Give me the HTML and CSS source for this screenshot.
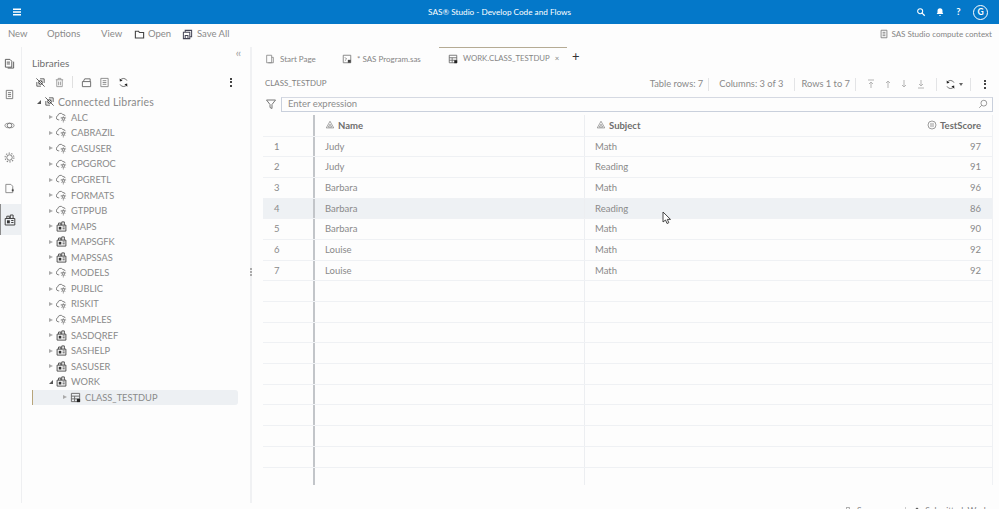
FILE: index.html
```html
<!DOCTYPE html>
<html lang="en">
<head>
<meta charset="utf-8">
<title>SAS Studio</title>
<link rel="stylesheet" href="styles.css">
</head>
<body>
<svg class="defs" width="0" height="0" aria-hidden="true">
  <symbol id="i-cloud" viewBox="0 0 12 12"><path d="M3.500 8.500H2.500A2.300 2.300 0 0 1 2 4 3 3 0 0 1 7.500 2.800 2.200 2.200 0 0 1 10 4.500" fill="none" stroke="#777" stroke-width="1"/><path d="M5 6.500h6M8 4.500v7M5.800 9.800l4.400-4.400M5.800 5.400l4.400 4.400" fill="none" stroke="#777" stroke-width=".7"/><circle cx="8" cy="7.500" r="1.300" fill="#fff" stroke="#666" stroke-width=".8"/></symbol>
  <symbol id="i-lib" viewBox="0 0 12 12"><path d="M1.200 4.500h9.600v6.500H1.200zM2.800 4.500V2.200h2.500V4.500M6.300 4.500V1h2.800V4.500" fill="none" stroke="#444" stroke-width="1"/><path d="M3 6.300h2.800v3H3z" fill="#333"/><path d="M7.200 6.500h2.300M7.200 8.500h2.300" stroke="#444"/></symbol>
  <symbol id="i-table" viewBox="0 0 12 12"><path d="M1.500 1.500h9v9h-9zM1.500 4.500h9M1.500 7.500h9M5 4.500v6" fill="none" stroke="#666"/><path d="M7.500 7.500H11V11H7.500z" fill="#222"/></symbol>
  <symbol id="i-disc" viewBox="0 0 12 12"><path d="M1.500 1.500l9 9M2 5.500 2 10 6.500 10M5.500 2H10V6.500" fill="none" stroke="#555" stroke-width="1"/><path d="M4 8l4-4" stroke="#777"/><circle cx="6" cy="6" r="2" fill="none" stroke="#333"/></symbol>
  <symbol id="i-tri" viewBox="0 0 12 12"><path d="M6 1.500 10.500 9.500H1.500zM6 5 8 8.500H4z" fill="none" stroke="#888" stroke-width=".9"/></symbol>
  <symbol id="i-num" viewBox="0 0 12 12"><circle cx="6" cy="6" r="4.800" fill="none" stroke="#888"/><path d="M4.800 3.500v5M7.200 3.500v5" stroke="#888"/></symbol>
  <symbol id="i-refresh" viewBox="0 0 12 12"><path d="M9.800 4A4.200 4.200 0 0 0 2.500 3.500M2.200 8a4.200 4.200 0 0 0 7.300.5" fill="none" stroke="#666"/><path d="M1.800 1.500 2 5l3-1zM10.200 10.500 10 7l-3 1z" fill="#222"/></symbol>
  <symbol id="i-doc" viewBox="0 0 12 12"><path d="M2.500 1.500h7v9h-7zM4.300 4h3.400M4.300 6h3.400M4.300 8h3.400" fill="none" stroke="#777"/></symbol>
</svg>

<header class="app-bar">
  <div class="app-bar-left">
    <svg class="ico-14" viewBox="0 0 14 14"><path d="M3 3.500h8v1.400H3zM3 6.300h8v1.400H3zM3 9.100h8v1.400H3z" fill="#fff"/></svg>
  </div>
  <div class="app-title">SAS® Studio - Develop Code and Flows</div>
  <div class="app-bar-right">
    <svg class="ico-10" viewBox="0 0 12 12"><circle cx="5" cy="5" r="3" fill="none" stroke="#fff" stroke-width="1.300"/><path d="M7.300 7.300 10.500 10.500" stroke="#fff" stroke-width="1.500"/></svg>
    <svg class="ico-10" viewBox="0 0 12 12"><path d="M6 1.500a3 3 0 0 1 3 3V7l1 1.500H2L3 7V4.500a3 3 0 0 1 3-3zM5 9.500h2v1H5z" fill="#fff"/></svg>
    <span class="help">?</span>
    <span class="avatar">G</span>
  </div>
</header>

<nav class="menu-bar">
  <div class="menu-items">
    <span class="menu-new">New</span>
    <span class="menu-options">Options</span>
    <span class="menu-view">View</span>
    <span class="menu-open"><svg class="ico-11" viewBox="0 0 12 12"><path d="M1.500 2.500h3.500l1 1.300h4.500v6h-9z" fill="none" stroke="#444" stroke-width="1.200"/></svg>Open</span>
    <span class="menu-save"><svg class="ico-11" viewBox="0 0 12 12"><path d="M1.500 3.500h7v7h-7zM3.500 3.500v-2h7v7h-2M3.500 7h3v3.500h-3z" fill="none" stroke="#445" stroke-width="1.100"/></svg>Save All</span>
  </div>
  <div class="context"><svg class="ico-10" viewBox="0 0 12 12"><use href="#i-doc"/></svg>SAS Studio compute context</div>
</nav>

<div class="workspace">
  <aside class="rail">
    <div class="rail-btn"><svg class="ico-11" viewBox="0 0 12 12"><path d="M1.500 1.500h5l2 2v6.500h-7zM3 4.500h3.500M3 6.500h3.500M10.500 4v7H4" fill="none" stroke="#555"/></svg></div>
    <div class="rail-btn"><svg class="ico-11" viewBox="0 0 12 12"><use href="#i-doc"/></svg></div>
    <div class="rail-btn"><svg class="ico-11" viewBox="0 0 12 12"><ellipse cx="6" cy="6" rx="5" ry="2.500" fill="none" stroke="#888"/><circle cx="6" cy="6" r="2.500" fill="none" stroke="#777"/></svg></div>
    <div class="rail-btn"><svg class="ico-11" viewBox="0 0 12 12"><circle cx="6" cy="6" r="3" fill="none" stroke="#777"/><circle cx="6" cy="6" r="4.800" fill="none" stroke="#888" stroke-dasharray="1.500 1.500" stroke-width="1.200"/></svg></div>
    <div class="rail-btn"><svg class="ico-11" viewBox="0 0 12 12"><path d="M2 1.500h5.500l2 2v7H2zM9.500 6v2" fill="none" stroke="#888"/><path d="M8.500 7h2v2h-2z" fill="#444"/></svg></div>
    <div class="rail-btn active"><svg class="ico-12" viewBox="0 0 12 12"><use href="#i-lib"/></svg></div>
  </aside>

  <section class="panel">
    <div class="collapse">‹‹</div>
    <h2 class="panel-title">Libraries</h2>
    <div class="panel-tools">
      <div class="tool-group">
        <svg class="ico-11" viewBox="0 0 12 12"><use href="#i-disc"/></svg>
        <svg class="ico-11" viewBox="0 0 12 12"><path d="M2 3h8M4.500 3V1.500h3V3M3 3v7.500h6V3M5 5v4M7 5v4" fill="none" stroke="#999"/></svg>
        <span class="tool-sep"></span>
        <svg class="ico-11" viewBox="0 0 12 12"><path d="M1.500 5h9v5.500h-9zM2.500 5l1.500-3h6v3" fill="none" stroke="#666"/></svg>
        <svg class="ico-11" viewBox="0 0 12 12"><path d="M2 1.500h8v9H2zM4 4h4M4 6h4M4 8h4" fill="none" stroke="#888"/></svg>
        <svg class="ico-11" viewBox="0 0 12 12"><use href="#i-refresh"/></svg>
      </div>
      <div class="dots"><i></i><i></i><i></i></div>
    </div>
    <ul class="tree">
      <li class="node root"><span class="arrow down"></span><svg class="ico-11" viewBox="0 0 12 12"><use href="#i-disc"/></svg>Connected Libraries</li>
      <li class="node"><span class="arrow"></span><svg class="ico-11" viewBox="0 0 12 12"><use href="#i-cloud"/></svg>ALC</li>
      <li class="node"><span class="arrow"></span><svg class="ico-11" viewBox="0 0 12 12"><use href="#i-cloud"/></svg>CABRAZIL</li>
      <li class="node"><span class="arrow"></span><svg class="ico-11" viewBox="0 0 12 12"><use href="#i-cloud"/></svg>CASUSER</li>
      <li class="node"><span class="arrow"></span><svg class="ico-11" viewBox="0 0 12 12"><use href="#i-cloud"/></svg>CPGGROC</li>
      <li class="node"><span class="arrow"></span><svg class="ico-11" viewBox="0 0 12 12"><use href="#i-cloud"/></svg>CPGRETL</li>
      <li class="node"><span class="arrow"></span><svg class="ico-11" viewBox="0 0 12 12"><use href="#i-cloud"/></svg>FORMATS</li>
      <li class="node"><span class="arrow"></span><svg class="ico-11" viewBox="0 0 12 12"><use href="#i-cloud"/></svg>GTPPUB</li>
      <li class="node"><span class="arrow"></span><svg class="ico-11" viewBox="0 0 12 12"><use href="#i-lib"/></svg>MAPS</li>
      <li class="node"><span class="arrow"></span><svg class="ico-11" viewBox="0 0 12 12"><use href="#i-lib"/></svg>MAPSGFK</li>
      <li class="node"><span class="arrow"></span><svg class="ico-11" viewBox="0 0 12 12"><use href="#i-lib"/></svg>MAPSSAS</li>
      <li class="node"><span class="arrow"></span><svg class="ico-11" viewBox="0 0 12 12"><use href="#i-cloud"/></svg>MODELS</li>
      <li class="node"><span class="arrow"></span><svg class="ico-11" viewBox="0 0 12 12"><use href="#i-cloud"/></svg>PUBLIC</li>
      <li class="node"><span class="arrow"></span><svg class="ico-11" viewBox="0 0 12 12"><use href="#i-cloud"/></svg>RISKIT</li>
      <li class="node"><span class="arrow"></span><svg class="ico-11" viewBox="0 0 12 12"><use href="#i-cloud"/></svg>SAMPLES</li>
      <li class="node"><span class="arrow"></span><svg class="ico-11" viewBox="0 0 12 12"><use href="#i-lib"/></svg>SASDQREF</li>
      <li class="node"><span class="arrow"></span><svg class="ico-11" viewBox="0 0 12 12"><use href="#i-lib"/></svg>SASHELP</li>
      <li class="node"><span class="arrow"></span><svg class="ico-11" viewBox="0 0 12 12"><use href="#i-lib"/></svg>SASUSER</li>
      <li class="node"><span class="arrow down"></span><svg class="ico-11" viewBox="0 0 12 12"><use href="#i-lib"/></svg>WORK</li>
      <li class="node leaf"><span class="arrow"></span><svg class="ico-11" viewBox="0 0 12 12"><use href="#i-table"/></svg>CLASS_TESTDUP</li>
    </ul>
    <div class="grip"><i></i><i></i><i></i></div>
  </section>

  <main class="main">
    <div class="tabs">
      <div class="tab tab-start"><svg class="ico-10" viewBox="0 0 12 12"><path d="M2 1.500h6v9H2zM8 4h2v6.500H4" fill="none" stroke="#888"/></svg>Start Page</div>
      <div class="tab tab-prog"><svg class="ico-10" viewBox="0 0 12 12"><path d="M1.500 1.500h9v9h-9zM3.500 4l2 2-2 2" fill="none" stroke="#777"/><path d="M7 7h3.500v3.500H7z" fill="#444"/></svg>* SAS Program.sas</div>
      <div class="tab tab-active"><svg class="ico-10" viewBox="0 0 12 12"><use href="#i-table"/></svg>WORK.CLASS_TESTDUP<span class="tab-x">×</span></div>
      <div class="tab-add">+</div>
    </div>
    <div class="info-bar">
      <span class="table-name">CLASS_TESTDUP</span>
      <div class="info-right">
        <span class="info info-rows">Table rows: 7</span>
        <span class="info info-cols">Columns: 3 of 3</span>
        <span class="info info-range">Rows 1 to 7</span>
        <span class="info info-nav">
          <svg class="ico-10" viewBox="0 0 10 10"><path d="M2 1h6M5 9V3M3 5l2-2 2 2" fill="none" stroke="#b5b5b5"/></svg>
          <svg class="ico-10" viewBox="0 0 10 10"><path d="M5 9V2M3 4l2-2 2 2" fill="none" stroke="#b5b5b5"/></svg>
          <svg class="ico-10" viewBox="0 0 10 10"><path d="M5 1v7M3 6l2 2 2-2" fill="none" stroke="#b5b5b5"/></svg>
          <svg class="ico-10" viewBox="0 0 10 10"><path d="M2 9h6M5 1v6M3 5l2 2 2-2" fill="none" stroke="#b5b5b5"/></svg>
        </span>
        <span class="info info-refresh"><svg class="ico-11" viewBox="0 0 12 12"><use href="#i-refresh"/></svg><span class="caret"></span></span>
        <span class="info-more"><span class="dots"><i></i><i></i><i></i></span></span>
      </div>
    </div>
    <div class="filter-bar">
      <svg class="ico-12" viewBox="0 0 12 12"><path d="M1.500 2h9L7 6.500V10.500L5 9.500V6.500z" fill="none" stroke="#777"/></svg>
      <div class="filter-input"><span>Enter expression</span><svg class="ico-10" viewBox="0 0 12 12"><circle cx="7" cy="5" r="3.500" fill="none" stroke="#888"/><path d="M4.500 7.500 1.500 10.500" stroke="#888"/></svg></div>
    </div>
    <div class="grid">
      <div class="row head">
        <div class="c-num"></div>
        <div class="c-col"><svg class="ico-10" viewBox="0 0 12 12"><use href="#i-tri"/></svg>Name</div>
        <div class="c-col"><svg class="ico-10" viewBox="0 0 12 12"><use href="#i-tri"/></svg>Subject</div>
        <div class="c-score"><svg class="ico-10" viewBox="0 0 12 12"><use href="#i-num"/></svg>TestScore</div>
      </div>
      <div class="row"><div class="c-num">1</div><div class="c-col">Judy</div><div class="c-col">Math</div><div class="c-score">97</div></div>
      <div class="row"><div class="c-num">2</div><div class="c-col">Judy</div><div class="c-col">Reading</div><div class="c-score">91</div></div>
      <div class="row"><div class="c-num">3</div><div class="c-col">Barbara</div><div class="c-col">Math</div><div class="c-score">96</div></div>
      <div class="row hover"><div class="c-num">4</div><div class="c-col">Barbara</div><div class="c-col">Reading</div><div class="c-score">86</div></div>
      <div class="row"><div class="c-num">5</div><div class="c-col">Barbara</div><div class="c-col">Math</div><div class="c-score">90</div></div>
      <div class="row"><div class="c-num">6</div><div class="c-col">Louise</div><div class="c-col">Math</div><div class="c-score">92</div></div>
      <div class="row"><div class="c-num">7</div><div class="c-col">Louise</div><div class="c-col">Math</div><div class="c-score">92</div></div>
      <div class="row"><div class="c-num"></div><div class="c-col"></div><div class="c-col"></div><div class="c-score"></div></div>
      <div class="row"><div class="c-num"></div><div class="c-col"></div><div class="c-col"></div><div class="c-score"></div></div>
      <div class="row"><div class="c-num"></div><div class="c-col"></div><div class="c-col"></div><div class="c-score"></div></div>
      <div class="row"><div class="c-num"></div><div class="c-col"></div><div class="c-col"></div><div class="c-score"></div></div>
      <div class="row"><div class="c-num"></div><div class="c-col"></div><div class="c-col"></div><div class="c-score"></div></div>
      <div class="row"><div class="c-num"></div><div class="c-col"></div><div class="c-col"></div><div class="c-score"></div></div>
      <div class="row"><div class="c-num"></div><div class="c-col"></div><div class="c-col"></div><div class="c-score"></div></div>
      <div class="row"><div class="c-num"></div><div class="c-col"></div><div class="c-col"></div><div class="c-score"></div></div>
      <div class="row"><div class="c-num"></div><div class="c-col"></div><div class="c-col"></div><div class="c-score"></div></div>
      <div class="row last"><div class="c-num"></div><div class="c-col"></div><div class="c-col"></div><div class="c-score"></div></div>
    </div>
    <svg class="cursor" width="11" height="14" viewBox="0 0 11 14"><path d="M1 1v10l2.500-2 1.500 3.500 1.800-.8L5.300 8.400H8.500z" fill="#fff" stroke="#333" stroke-width=".9"/></svg>
  </main>
</div>

<footer class="status">
  <svg class="status-ico" viewBox="0 0 8 8"><path d="M.5.500h4v7h-4z" fill="none" stroke="#888"/></svg>
  <span class="status-server">Server: Work</span>
  <span class="status-sep"></span>
  <svg class="status-ico" viewBox="0 0 8 8"><path d="M4 .500 7.500 4h-7z" fill="#555"/></svg>
  <span>Submitted: Work 44</span>
</footer>
</body>
</html>
```

FILE: styles.css
```css
* { box-sizing: border-box; }
html, body { margin: 0; padding: 0; }
body {
  width: 999px;
  height: 509px;
  overflow: hidden;
  background: #fdfdfd;
  color: #858585;
  font: 10px/1 Lato, "Open Sans", sans-serif;
}
svg { display: block; flex: none; }
.defs { position: absolute; }
.ico-10 { width: 10px; height: 10px; }
.ico-11 { width: 11px; height: 11px; }
.ico-12 { width: 12px; height: 12px; }
.ico-14 { width: 14px; height: 14px; }

.app-bar {
  height: 24px;
  background: #0478c9;
  color: #fff;
  display: grid;
  grid-template-columns: 1fr auto 1fr;
  align-items: center;
}
.app-bar-left { padding-left: 10px; }
.app-title { font-size: 8.200px; }
.app-bar-right {
  display: flex;
  align-items: center;
  justify-content: flex-end;
  gap: 9px;
  padding-right: 11px;
}
.help { width: 10px; text-align: center; font-weight: 700; font-size: 9.500px; }
.avatar {
  width: 15px;
  height: 15px;
  border: 1px solid #fff;
  border-radius: 50%;
  display: flex;
  align-items: center;
  justify-content: center;
  font-size: 8.500px;
  font-weight: 700;
  margin-left: .5px;
}

.menu-bar {
  height: 23px;
  display: flex;
  align-items: center;
  justify-content: space-between;
  padding: 0 7px 3px 8px;
}
.menu-items { display: flex; align-items: center; font-size: 9.500px; color: #8a8a8a; }
.menu-new { width: 39px; }
.menu-options { width: 54px; }
.menu-view { width: 33px; }
.menu-open { width: 48px; display: flex; align-items: center; gap: 3px; }
.menu-save { display: flex; align-items: center; gap: 4px; }
.context { display: flex; align-items: center; gap: 2px; font-size: 8.050px; color: #858585; }

.workspace { height: 456px; display: flex; }
.rail { width: 22px; border-right: 1px solid #eeeff1; padding-top: 1px; }
.rail-btn {
  height: 31.200px;
  padding-right: 2px;
  display: flex;
  align-items: center;
  justify-content: center;
}
.rail-btn.active { background: #edf0f3; border-left: 1px solid #8d8d8d; padding-right: 3px; }

.panel {
  width: 230px;
  position: relative;
  border-right: 2px solid #f0f1f3;
  padding: 11px 0 0 10px;
}
.collapse {
  position: absolute;
  right: 10px;
  top: 0;
  font-size: 11px;
  letter-spacing: -1px;
  color: #999;
}
.panel-title { margin: 0; font-size: 10px; font-weight: 400; color: #6e6e6e; height: 12px; }
.panel-tools {
  height: 24px;
  width: 205px;
  display: flex;
  align-items: center;
  justify-content: space-between;
  padding: 0 5px 0 3px;
}
.tool-group { display: flex; align-items: center; gap: 7.500px; }
.tool-sep { width: 1px; height: 12px; background: #e0e0e0; }
.dots { display: flex; flex-direction: column; gap: 1.500px; }
.dots i { width: 2px; height: 2px; background: #444; display: block; }

.tree { list-style: none; margin: 0; padding: 0; }
.node {
  height: 15.570px;
  display: flex;
  align-items: center;
  padding-left: 17px;
  color: #8a8a8a;
  font-size: 9.300px;
}
.node svg { margin: 0 4px 0 3px; }
.root { padding-left: 5px; font-size: 10.500px; letter-spacing: .2px; }
.root svg { margin: 0 3px; }
.leaf {
  width: 206px;
  padding-left: 30px;
  background: #edf0f3;
  border-left: 1px solid #b8a57a;
  border-radius: 0 3px 3px 0;
}
.arrow {
  width: 0;
  height: 0;
  border-left: 4px solid #aaa;
  border-top: 2.500px solid transparent;
  border-bottom: 2.500px solid transparent;
  flex: none;
}
.arrow.down { border: 0; border-right: 4px solid #555; border-top: 4px solid transparent; }
.grip {
  position: absolute;
  right: -2px;
  top: 221px;
  display: flex;
  flex-direction: column;
  gap: 1px;
}
.grip i { width: 2px; height: 2px; background: #aaa; display: block; }

.main { flex: 1; position: relative; padding: 0 6px 0 11px; }
.tabs { height: 22px; display: flex; align-items: stretch; font-size: 8px; color: #858585; }
.tab { display: flex; align-items: center; gap: 5px; border-top: 1px solid transparent; }
.tab-start { width: 79px; padding-left: 2px; }
.tab-prog { width: 97px; }
.tab-active { width: 128px; padding-left: 9px; border-top-color: #b5ab94; font-size: 7.800px; }
.tab-x { margin-left: 0; }
.tab-add { color: #333; font-size: 13px; padding: 3px 0 0 5px; }

.info-bar {
  height: 26px;
  display: flex;
  align-items: center;
  justify-content: space-between;
  padding: 4px 0 0 2px;
}
.table-name { font-size: 7.900px; color: #808080; }
.info-right { display: flex; align-items: center; }
.info {
  display: flex;
  align-items: center;
  height: 13px;
  border-right: 1px solid #e3e4e6;
  font-size: 9.300px;
  color: #8a8a8a;
}
.info-rows { padding-right: 5px; }
.info-cols { padding: 0 11px 0 10px; }
.info-range { padding: 0 5px 0 6px; }
.info-nav { gap: 6.700px; padding: 0 10px; }
.info-refresh { gap: 3px; padding: 0 7px 0 8px; }
.info-more { padding: 0 7px 0 13px; }
.caret { border: 2px solid transparent; border-top: 3px solid #666; border-bottom: 0; }

.filter-bar {
  height: 18px;
  display: flex;
  align-items: center;
  gap: 4px;
  padding-left: 2px;
}
.filter-input {
  flex: 1;
  height: 15px;
  border: 1px solid #c9d0dc;
  border-top-color: #d5d9e2;
  display: flex;
  align-items: center;
  justify-content: space-between;
  padding: 0 4px 0 6px;
  font-size: 9.500px;
  color: #8c8c8c;
}

.grid { width: 730px; margin-top: 2px; }
.row {
  height: 20.690px;
  display: grid;
  grid-template-columns: 52px 270px 1fr 150px;
  border-bottom: 1px solid #eff1f4;
  font-size: 9.500px;
  color: #8a8a8a;
}
.row > div { display: flex; align-items: center; }
.row .c-num { padding-left: 11px; border-right: 2px solid #c2c5c9; }
.row .c-col { padding-left: 10px; }
.row .c-col:nth-child(2) { border-right: 1px solid #eceef1; }
.row .c-score { justify-content: flex-end; padding-right: 11px; border-right: 1px solid #eff1f4; }
.row.head { font-weight: 700; color: #6e6e6e; height: 21.500px; }
.row.head .c-col, .row.head .c-score { gap: 3px; }
.row.head .c-col:nth-child(3) { padding-left: 11px; }
.row.hover { background: #eef1f4; }
.row.last { border-bottom: 0; height: 17px; }

.cursor { position: absolute; left: 410px; top: 164px; }

.status {
  height: 6px;
  overflow: hidden;
  display: flex;
  align-items: flex-start;
  padding: 3.500px 0 0 846px;
  font-size: 8.500px;
  color: #808080;
}
.status-ico { width: 6px; height: 6px; margin-right: 5px; }
.status-server { width: 49px; }
.status-sep { width: 1px; height: 6px; background: #ccc; margin-right: 8px; }
```
